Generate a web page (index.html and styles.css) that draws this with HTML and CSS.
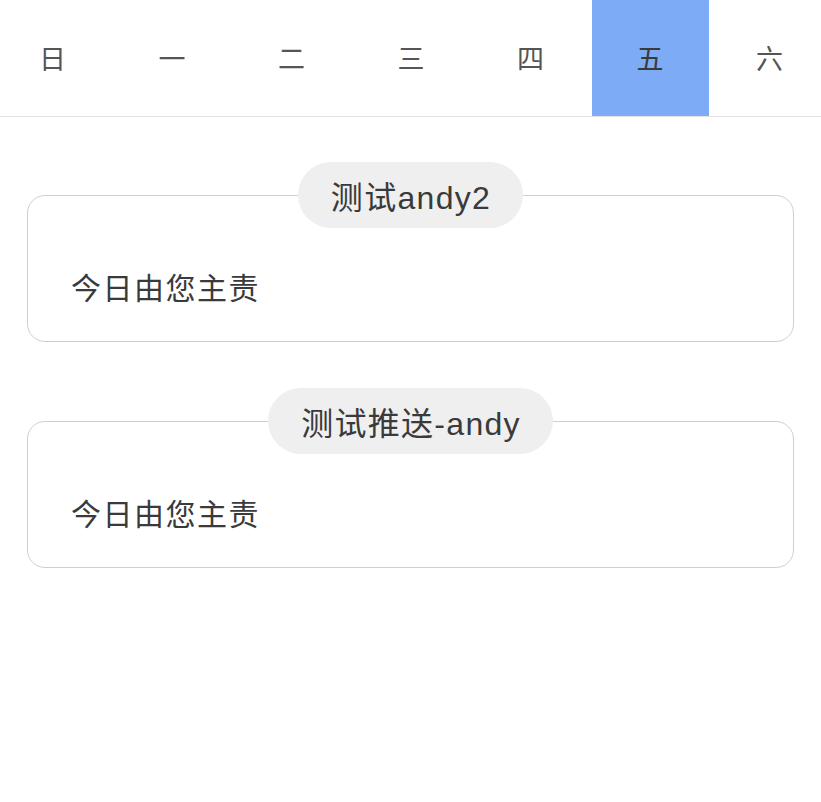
FILE: index.html
```html
<!DOCTYPE html>
<html lang="zh">
<head>
<meta charset="utf-8">
<link rel="stylesheet" href="styles.css">
</head>
<body>
<nav class="tabs">
  <div class="tab">日</div>
  <div class="tab">一</div>
  <div class="tab">二</div>
  <div class="tab">三</div>
  <div class="tab">四</div>
  <div class="tab active">五</div>
  <div class="tab">六</div>
</nav>
<main class="list">
  <section class="item">
    <div class="pill">测试andy2</div>
    <div class="card">今日由您主责</div>
  </section>
  <section class="item">
    <div class="pill">测试推送-andy</div>
    <div class="card">今日由您主责</div>
  </section>
</main>
</body>
</html>
```

FILE: styles.css
```css
* { box-sizing: border-box; }
html, body { margin: 0; padding: 0; background: #fff; overflow: hidden; }
body {
  font-family: "Liberation Sans", "Noto Sans CJK SC", sans-serif;
  color: #333;
}
.tabs {
  display: grid;
  grid-template-columns: repeat(7, 117px);
  column-gap: 2.5px;
  margin-left: -6px;
  height: 117px;
  border-bottom: 1px solid #e2e2e2;
}
.tab {
  display: flex;
  align-items: center;
  justify-content: center;
  font-family: "Noto Sans CJK SC", sans-serif;
  font-weight: 400;
  font-size: 27px;
  color: #555;
  padding-bottom: 2px;
}
.tab.active { background: #7eabf6; color: #3a3a3a; }
.list {
  padding: 45px 27px 0;
  display: flex;
  flex-direction: column;
  gap: 46px;
}
.item {
  display: flex;
  flex-direction: column;
  align-items: center;
}
.pill {
  position: relative;
  z-index: 1;
  height: 66px;
  padding: 0 32px 0 33px;
  border-radius: 33px;
  background: #efefef;
  display: flex;
  align-items: center;
  font-size: 32px;
  letter-spacing: 1.3px;
  color: #3a3a3a;
}
.card {
  align-self: stretch;
  margin-top: -33px;
  height: 147px;
  border: 1px solid #cfcfcf;
  border-radius: 18px;
  padding: 70px 0 0 43px;
  font-family: "Noto Sans CJK SC", sans-serif;
  font-weight: 400;
  font-size: 30px;
  line-height: 40px;
  letter-spacing: 1.5px;
  color: #3a3a3a;
}
```
